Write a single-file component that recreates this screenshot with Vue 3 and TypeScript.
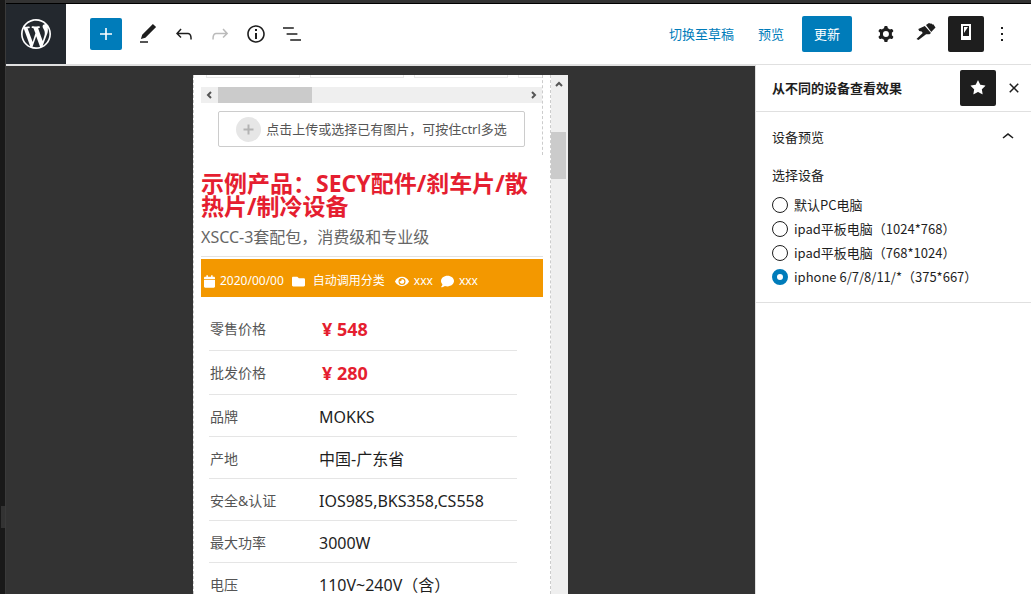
<script setup lang="ts">
import { ref } from 'vue'

interface Spec { label: string; value: string; price?: boolean }

const specs: Spec[] = [
  { label: '零售价格', value: '¥ 548', price: true },
  { label: '批发价格', value: '¥ 280', price: true },
  { label: '品牌', value: 'MOKKS' },
  { label: '产地', value: '中国-广东省' },
  { label: '安全&认证', value: 'IOS985,BKS358,CS558' },
  { label: '最大功率', value: '3000W' },
  { label: '电压', value: '110V~240V（含）' },
]

const devices = [
  { id: 'pc', label: '默认PC电脑' },
  { id: 'ipad-l', label: 'ipad平板电脑（1024*768）' },
  { id: 'ipad-p', label: 'ipad平板电脑（768*1024）' },
  { id: 'iphone', label: 'iphone 6/7/8/11/*（375*667）' },
]
const device = ref('iphone')

const tools = [
  { name: '工具', d: 'M20.1 5.1L16.9 2 6.2 12.7l-1.3 4.4 4.5-1.3L20.1 5.1zM4 20.8h8v-1.5H4v1.5z' },
  { name: '撤销', d: 'M18.3 11.7c-.6-.6-1.4-.9-2.3-.9H6.7l2.9-3.3-1.1-1-4.5 5L8.5 16l1-1-2.7-2.7H16c.5 0 .9.2 1.3.5 1 1 1 3.4 1 4.5v.3h1.5v-.2c0-1.5 0-4.3-1.5-5.7z' },
  { name: '重做', off: true, d: 'M15.6 6.5l-1.1 1 2.9 3.3H8c-.9 0-1.7.3-2.3.9-1.4 1.5-1.4 4.2-1.4 5.6v.2h1.5v-.3c0-1.1 0-3.5 1-4.5.3-.3.7-.5 1.3-.5h9.2L14.5 15l1.1 1.1 4.6-4.6-4.6-5z' },
  { name: '详情', d: 'M12 3.2c-4.8 0-8.8 3.9-8.8 8.8 0 4.8 3.9 8.8 8.8 8.8 4.8 0 8.8-3.9 8.8-8.8 0-4.8-4-8.8-8.8-8.8zm0 16c-4 0-7.2-3.3-7.2-7.2C4.8 8 8 4.8 12 4.8s7.2 3.3 7.2 7.2c0 4-3.2 7.2-7.2 7.2zM11 17h2v-6h-2v6zm0-8h2V7h-2v2z' },
  { name: '列表视图', d: 'M13.8 5.2H3v1.5h10.8V5.2zm-3.6 12v1.5H21v-1.5H10.2zm7.2-6H6.6v1.5h10.8v-1.5z' },
]
</script>

<template>
  <div class="screen">
    <div class="edge"><span class="edge-handle"></span></div>
    <div class="editor">
      <header class="topbar">
        <a class="logo" href="#" aria-label="WordPress">
          <svg width="36" height="36" viewBox="-2 -2 24 24"><path d="M20 10c0-5.51-4.49-10-10-10C4.48 0 0 4.49 0 10c0 5.52 4.48 10 10 10 5.51 0 10-4.48 10-10zM7.78 15.37L4.37 6.22c.55-.02 1.17-.08 1.17-.08.5-.06.44-1.13-.06-1.11 0 0-1.45.11-2.37.11-.18 0-.37 0-.58-.01C4.12 2.69 6.87 1.11 10 1.11c2.33 0 4.45.87 6.05 2.34-.68-.11-1.65.39-1.65 1.58 0 .74.45 1.36.9 2.1.35.61.55 1.36.55 2.46 0 1.49-1.4 5-1.4 5l-3.03-8.37c.54-.02.82-.17.82-.17.5-.05.44-1.25-.06-1.22 0 0-1.44.12-2.38.12-.87 0-2.33-.12-2.33-.12-.5-.03-.56 1.2-.06 1.22l.92.08 1.26 3.41zM17.41 10c.24-.64.74-1.87.43-4.25.7 1.29 1.05 2.71 1.05 4.25 0 3.29-1.73 6.24-4.4 7.78.97-2.59 1.94-5.2 2.92-7.78zM6.1 18.09C3.12 16.65 1.11 13.53 1.11 10c0-1.3.23-2.48.72-3.59C3.25 10.3 4.67 14.2 6.1 18.09zm4.03-6.63l2.58 6.98c-.86.29-1.76.45-2.71.45-.79 0-1.57-.11-2.29-.33.81-2.38 1.62-4.74 2.42-7.1z" /></svg>
        </a>
        <div class="tools">
          <button class="add" type="button" aria-label="添加区块">
            <svg width="24" height="24" viewBox="0 0 24 24"><path d="M18 11.2h-5.2V6h-1.6v5.2H6v1.6h5.2V18h1.6v-5.2H18z" /></svg>
          </button>
          <button v-for="t in tools" :key="t.name" class="tool" type="button" :aria-label="t.name" :disabled="t.off">
            <svg width="24" height="24" viewBox="0 0 24 24"><path :d="t.d" /></svg>
          </button>
        </div>
        <div class="actions">
          <button class="link" type="button">切换至草稿</button>
          <button class="link" type="button">预览</button>
          <button class="primary" type="button">更新</button>
          <button class="icon cog" type="button" aria-label="设置">
            <svg width="24" height="24" viewBox="0 0 24 24"><path fill-rule="evenodd" d="M10.289 4.836A1 1 0 0111.275 4h1.306a1 1 0 01.987.836l.244 1.466c.787.26 1.503.679 2.108 1.218l1.393-.522a1 1 0 011.216.437l.653 1.13a1 1 0 01-.23 1.273l-1.148.944a6.025 6.025 0 010 2.435l1.149.946a1 1 0 01.23 1.272l-.653 1.13a1 1 0 01-1.216.437l-1.394-.522c-.605.54-1.32.958-2.108 1.218l-.244 1.466a1 1 0 01-.987.836h-1.306a1 1 0 01-.986-.836l-.244-1.466a5.995 5.995 0 01-2.108-1.218l-1.394.522a1 1 0 01-1.217-.436l-.653-1.131a1 1 0 01.23-1.272l1.149-.946a6.026 6.026 0 010-2.435l-1.148-.944a1 1 0 01-.23-1.272l.653-1.131a1 1 0 011.217-.437l1.393.522a5.994 5.994 0 012.108-1.218l.244-1.466zM14.929 12a3 3 0 11-6 0 3 3 0 016 0z" /></svg>
          </button>
          <button class="icon" type="button" aria-label="样式">
            <svg width="20" height="24" viewBox="0 0 20 24"><path d="M10 3L13 1l1.500.8.5-.5L16.500 2.500l.8-.3L19.500 5.500l-4.300 4.500zM8.800 4l6.200 7-1.500 1.300h-3.400L2.500 18 .5 17l6.200-6-1-1.400-2.600-.6-.8-2z" /></svg>
          </button>
          <button class="icon active" type="button" aria-label="设备">
            <svg width="20" height="24" viewBox="0 0 20 24"><path fill-rule="evenodd" d="M5 2h10v16H5zM7 4v10h6V4z" /><path d="M8 5h4l-4 6z" /></svg>
          </button>
          <button class="more" type="button" aria-label="选项">
            <svg width="24" height="24" viewBox="0 0 24 24"><path d="M13 19h-2v-2h2v2zm0-6h-2v-2h2v2zm0-6h-2V5h2v2z" /></svg>
          </button>
        </div>
      </header>

      <div class="body">
        <main class="canvas">
          <div class="phone">
            <div class="page">
              <div class="gallery">
                <div class="thumbs"><span></span><span></span><span></span><span></span></div>
                <div class="hscroll">
                  <svg width="17" height="16" viewBox="0 0 17 16"><path d="M10 5L7 8l3 3" /></svg>
                  <span class="hthumb"></span>
                  <svg class="right" width="17" height="16" viewBox="0 0 17 16"><path d="M7 5l3 3-3 3" /></svg>
                </div>
                <button class="upload" type="button">
                  <svg width="25" height="25" viewBox="0 0 25 25"><circle cx="12.500" cy="12.500" r="12.500" fill="#e6e6e6" /><path d="M12.500 7.500v10M7.500 12.500h10" stroke="#b3b3b3" stroke-width="2" /></svg>
                  <span>点击上传或选择已有图片，可按住ctrl多选</span>
                </button>
              </div>
              <h1>示例产品：SECY配件/刹车片/散热片/制冷设备</h1>
              <p class="sub">XSCC-3套配包，消费级和专业级</p>
              <div class="meta">
                <svg width="11" height="13" viewBox="0 0 448 512"><path d="M12 192h424c6.600 0 12 5.400 12 12v260c0 26.500-21.500 48-48 48H48c-26.500 0-48-21.500-48-48V204c0-6.600 5.400-12 12-12zm436-44v-36c0-26.500-21.500-48-48-48h-48V12c0-6.600-5.400-12-12-12h-40c-6.600 0-12 5.400-12 12v52H160V12c0-6.600-5.400-12-12-12h-40c-6.600 0-12 5.400-12 12v52H48C21.500 64 0 85.500 0 112v36c0 6.600 5.400 12 12 12h424c6.600 0 12-5.400 12-12z" /></svg>
                <span class="date">2020/00/00</span>
                <svg width="13" height="13" viewBox="0 0 512 512"><path d="M464 128H272l-64-64H48C21.490 64 0 85.490 0 112v288c0 26.510 21.490 48 48 48h416c26.510 0 48-21.490 48-48V176c0-26.510-21.490-48-48-48z" /></svg>
                <span class="cat">自动调用分类</span>
                <svg width="14" height="13" viewBox="0 0 576 512"><path d="M572.520 241.400C518.290 135.590 410.930 64 288 64S57.680 135.640 3.480 241.410a32.350 32.350 0 0 0 0 29.190C57.710 376.410 165.070 448 288 448s230.320-71.640 284.520-177.410a32.350 32.350 0 0 0 0-29.190zM288 400a144 144 0 1 1 144-144 143.930 143.930 0 0 1-144 144zm0-240a95.310 95.310 0 0 0-25.310 3.790 47.850 47.850 0 0 1-66.900 66.900A95.780 95.780 0 1 0 288 160z" /></svg>
                <span class="views">xxx</span>
                <svg width="13" height="13" viewBox="0 0 512 512"><path d="M256 32C114.600 32 0 125.100 0 240c0 49.600 21.400 95 57 130.700C44.500 421.100 2.700 466 2.200 466.500c-2.200 2.300-2.800 5.700-1.500 8.700S4.800 480 8 480c66.300 0 116-31.800 140.600-51.400 32.700 12.300 69 19.400 107.400 19.400 141.400 0 256-93.100 256-208S397.400 32 256 32z" /></svg>
                <span>xxx</span>
              </div>
              <table class="specs">
                <tbody>
                  <tr v-for="s in specs" :key="s.label" :class="{ price: s.price }">
                    <th scope="row">{{ s.label }}</th>
                    <td>{{ s.value }}</td>
                  </tr>
                </tbody>
              </table>
            </div>
            <div class="vscroll">
              <svg width="16" height="17" viewBox="0 0 16 17"><path d="M5 11l3-3 3 3" /></svg>
              <span class="vthumb"></span>
            </div>
          </div>
        </main>

        <aside class="sidebar">
          <div class="side-head">
            <h2>从不同的设备查看效果</h2>
            <button class="icon active" type="button" aria-label="固定到工具栏" aria-pressed="true">
              <svg width="24" height="24" viewBox="0 0 24 24"><path d="M11.776 4.454a.25.25 0 01.448 0l2.069 4.192a.25.25 0 00.188.137l4.626.672a.25.25 0 01.139.426l-3.348 3.263a.25.25 0 00-.072.222l.79 4.607a.25.25 0 01-.362.263l-4.138-2.175a.25.25 0 00-.232 0l-4.138 2.175a.25.25 0 01-.363-.263l.79-4.607a.25.25 0 00-.071-.222L4.754 9.881a.25.25 0 01.139-.426l4.626-.672a.25.25 0 00.188-.137l2.069-4.192z" /></svg>
            </button>
            <button class="close" type="button" aria-label="关闭">
              <svg width="24" height="24" viewBox="0 0 24 24"><path d="M12 13.060l3.712 3.713 1.061-1.060L13.061 12l3.712-3.712-1.060-1.060L12 10.938 8.288 7.227l-1.061 1.060L10.939 12l-3.712 3.712 1.060 1.061L12 13.061z" /></svg>
            </button>
          </div>
          <section class="panel">
            <button class="panel-toggle" type="button" aria-expanded="true">
              <span>设备预览</span>
              <svg width="24" height="24" viewBox="0 0 24 24"><path d="M6.500 12.400L12 8l5.500 4.400-.9 1.200L12 10l-4.500 3.600-1-1.200z" /></svg>
            </button>
            <fieldset>
              <legend>选择设备</legend>
              <label v-for="d in devices" :key="d.id">
                <input v-model="device" type="radio" name="device" :value="d.id" />
                <span>{{ d.label }}</span>
              </label>
            </fieldset>
          </section>
        </aside>
      </div>
    </div>
  </div>
</template>

<style>
body {
  margin: 0;
  overflow: hidden;
}
</style>

<style scoped>
* {
  box-sizing: border-box;
}
.screen {
  display: flex;
  height: 100vh;
  overflow: hidden;
  background: #333;
  color: #1e1e1e;
  font: 13px/18px "Noto Sans CJK SC", "Open Sans", sans-serif;
}
button {
  margin: 0;
  padding: 0;
  border: 0;
  background: none;
  color: inherit;
  font: inherit;
  display: flex;
  align-items: center;
  justify-content: center;
}
svg {
  display: block;
  flex: none;
  fill: currentColor;
}
.edge {
  flex: none;
  width: 6px;
  padding: 506px 0 0 1px;
  background: #191919;
  border-right: 1px solid #3a3a3a;
}
.edge-handle {
  display: block;
  height: 22px;
  background: #333;
}
.editor {
  flex: 1;
  min-width: 0;
  display: flex;
  flex-direction: column;
  border-top: 3px solid #333;
}
.topbar {
  flex: none;
  display: flex;
  align-items: center;
  height: 62px;
  border-top: 1px solid #000;
  border-bottom: 1px solid #e0e0e0;
  background: #fff;
}
.logo {
  align-self: stretch;
  width: 60px;
  display: flex;
  align-items: center;
  justify-content: center;
  background: #23282e;
  color: #fff;
}
.tools {
  flex: 1;
  display: flex;
  align-items: center;
  padding-left: 24px;
}
.add {
  width: 32px;
  height: 32px;
  margin-right: 8px;
  border-radius: 2px;
  background: #007cba;
  color: #fff;
}
.tool {
  width: 36px;
  height: 36px;
}
.tool:disabled {
  color: #bbb;
}
.actions {
  display: flex;
  align-items: center;
  padding-right: 16px;
}
.link {
  height: 36px;
  margin-right: 24px;
  color: #007cba;
}
.link + .primary {
  margin-left: -6px;
}
.primary {
  width: 50px;
  height: 36px;
  margin-right: 16px;
  border-radius: 2px;
  background: #007cba;
  color: #fff;
}
.icon {
  width: 36px;
  height: 36px;
  border-radius: 2px;
}
.cog {
  margin-right: 4px;
}
.actions .active {
  margin-left: 4px;
}
.active {
  background: #1e1e1e;
  color: #fff;
}
.more {
  width: 36px;
  margin-right: -5px;
}
.body {
  flex: 1;
  min-height: 0;
  display: flex;
}
.canvas {
  flex: 1;
  min-width: 0;
  display: flex;
  justify-content: center;
  padding-top: 9px;
  border-top: 1px solid #e0e0e0;
}
.phone {
  display: flex;
  width: 375px;
  background: #fff;
  font-family: "Noto Sans", "Noto Sans CJK SC", sans-serif;
}
.page {
  flex: 1;
  min-width: 0;
  padding: 0 7px;
  border: 1px dashed #ccc;
  border-width: 0 1px;
}
.gallery {
  height: 80px;
  border-right: 1px dashed #ccc;
}
.thumbs {
  display: flex;
  gap: 10px;
  height: 3px;
  padding-left: 5px;
  overflow: hidden;
}
.thumbs span {
  flex: none;
  width: 94px;
  border: 1px solid #e8e8e8;
  border-top: 0;
}
.thumbs span:last-child {
  flex: 1;
  border-right: 0;
}
.hscroll {
  display: flex;
  height: 16px;
  margin-top: 9px;
  background: #efefef;
}
.hscroll svg,
.vscroll svg {
  fill: none;
  stroke: #555;
  stroke-width: 2;
}
.hthumb {
  width: 94px;
  background: #cbcbcb;
}
.right {
  margin-left: auto;
}
.upload {
  width: 307px;
  height: 36px;
  margin: 8px 0 0 17px;
  gap: 5px;
  border: 1px solid #ccc;
  border-radius: 2px;
  color: #555;
}
h1 {
  margin: 17px 0 0;
  color: #e51e30;
  font-size: 23px;
  line-height: 23px;
  font-weight: 700;
}
.sub {
  margin: 7px 0 0;
  padding-bottom: 7px;
  border-bottom: 1px solid #e2e2e2;
  color: #666;
  font-size: 16px;
  line-height: 24px;
}
.meta {
  display: flex;
  align-items: center;
  height: 38px;
  margin-top: 2px;
  padding: 6px 3px 0;
  background: #f39800;
  color: #fff;
  font-size: 12px;
}
.meta span {
  margin: 0 8px 0 5px;
}
.meta .cat {
  margin: 0 10px 0 8px;
}
.specs {
  width: 308px;
  margin: 9px 0 0 8px;
  border-collapse: collapse;
  table-layout: fixed;
}
.specs tr {
  height: 42px;
  border-bottom: 1px solid #e5e5e5;
}
.specs .price {
  height: 44px;
}
.specs th {
  width: 110px;
  padding: 4px 0 0 1px;
  text-align: left;
  font-size: 14px;
  font-weight: 400;
  color: #555;
}
.specs td {
  padding: 4px 0 0;
  font-size: 16px;
  line-height: 24px;
}
.specs .price th {
  padding-top: 2px;
}
.specs .price td {
  padding: 2px 0 0 3px;
  font-size: 18px;
  font-weight: 700;
  color: #e51e30;
}
.vscroll {
  width: 17px;
  background: #efefef;
}
.vthumb {
  display: block;
  width: 15px;
  height: 47px;
  margin-top: 40px;
  background: #cbcbcb;
}
.sidebar {
  flex: none;
  width: 276px;
  border-left: 1px solid #e0e0e0;
  background: #fff;
}
.side-head {
  display: flex;
  align-items: center;
  height: 47px;
  padding: 0 5px 0 16px;
  border-bottom: 1px solid #e0e0e0;
}
h2 {
  flex: 1;
  margin: 0;
  font-size: 13px;
  line-height: 18px;
  font-weight: 700;
}
.close {
  width: 24px;
  margin-left: 6px;
}
.panel {
  border-bottom: 1px solid #e0e0e0;
}
.panel-toggle {
  width: 100%;
  height: 50px;
  padding: 0 11px 0 16px;
  justify-content: space-between;
}
fieldset {
  margin: 4px 0 0;
  padding: 5px 16px 13px;
  border: 0;
}
legend {
  padding: 0;
  margin-bottom: 4px;
}
label {
  display: flex;
  align-items: center;
  gap: 6px;
  height: 24px;
  font-size: 13px;
}
input {
  appearance: none;
  width: 16px;
  height: 16px;
  margin: 0;
  border: 1px solid #1e1e1e;
  border-radius: 50%;
  background: #fff;
}
input:checked {
  border: 5px solid #007cba;
}
</style>
